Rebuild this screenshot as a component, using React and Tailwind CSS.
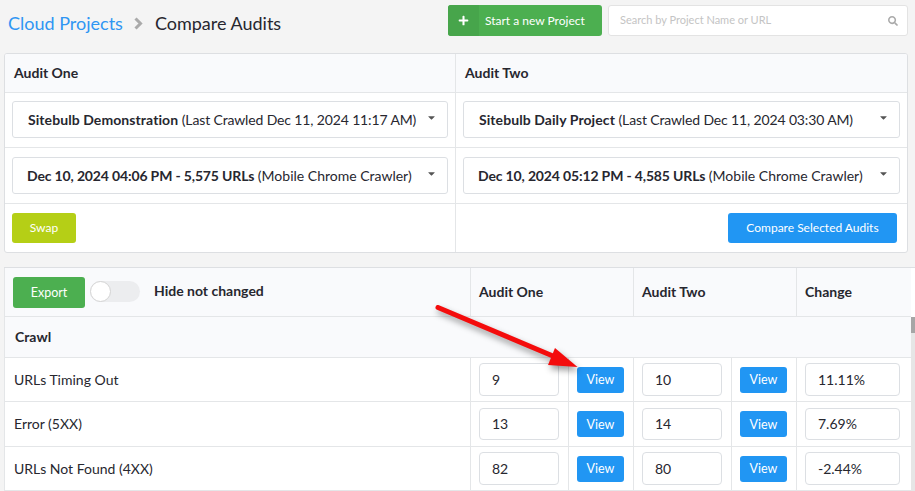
import React from 'react';
import { FaPlus, FaCaretDown, FaSearch } from 'react-icons/fa';

const rows = [
  { label: 'URLs Timing Out', one: '9', two: '10', change: '11.11%', h: 'h-[44px]', box: 'h-[33px]', nudge: '' },
  { label: 'Error (5XX)', one: '13', two: '14', change: '7.69%', h: 'h-[45px]', box: 'h-[32px]', nudge: 'pb-[2px]' },
  { label: 'URLs Not Found (4XX)', one: '82', two: '80', change: '-2.44%', h: 'h-[44px]', box: 'h-[33px]', nudge: '' },
];

const AuditSelect = ({ bold, rest, offset, boldTrack, restTrack }) => (
  <div className="relative h-[37px] flex items-center bg-white border border-[#dcdfe3] rounded-[3px] text-[14px] text-[#27272f]">
    <span className={`whitespace-nowrap ${offset}`}>
      <b className={`font-bold ${boldTrack}`}>{bold}</b> <span className={restTrack}>{rest}</span>
    </span>
    <FaCaretDown className="absolute right-[10px] top-[10px] w-[11px] h-[11px] text-[#555]" />
  </div>
);

const ValueBox = ({ value, box, className, nudge }) => (
  <div className={`${box} ${className} ${nudge} flex items-center bg-white border border-[#dcdfe3] rounded-[4px] pl-[12px] text-[14px] text-[#27272f]`}>
    {value}
  </div>
);

const ViewButton = () => (
  <button className="w-[47px] h-[26px] pt-[2px] bg-[#2196f3] rounded-[3px] text-white text-[12.5px]">View</button>
);

const Arrow = () => (
  <svg className="absolute left-[430px] top-[300px] w-[155px] h-[75px] drop-shadow-[2px_4px_3px_rgba(0,0,0,0.4)]" viewBox="0 0 155 75">
    <line x1="8" y1="7.5" x2="130" y2="59" stroke="#f40c0c" strokeWidth="5" strokeLinecap="round" />
    <polygon points="147.5,67 118,65 125,48" fill="#f40c0c" />
  </svg>
);

const App = () => {
  return (
    <div className="relative w-[915px] h-[491px] overflow-hidden bg-[#f4f4f4] font-['Lato',sans-serif] text-[#27272f]">
      {/* top bar */}
      <div className="flex items-start h-[53px] pt-[5px] pl-[8px] pr-[7px]">
        <a className="mt-[5px] text-[18px] text-[#2f96f3]">Cloud Projects</a>
        <svg className="mt-[12px] w-[9px] h-[13px] ml-[11px] mr-[12px] text-[#aaa]" viewBox="0 0 9 13">
          <polyline points="1.5,1.5 6.5,6.5 1.5,11.5" fill="none" stroke="currentColor" strokeWidth="3" />
        </svg>
        <span className="mt-[5px] text-[18px] text-[#27272f]">Compare Audits</span>
        <button className="ml-auto flex w-[154px] h-[31px] rounded-[3px] overflow-hidden bg-[#4caf50] text-white text-[12px]">
          <span className="w-[31px] h-full flex items-center justify-center bg-[#47a54b]">
            <FaPlus className="w-[11px] h-[11px]" />
          </span>
          <span className="pl-[6px] self-center">Start a new Project</span>
        </button>
        <div className="ml-[6px] w-[300px] h-[31px] flex items-center justify-between bg-white border border-[#e3e3e3] rounded-[3px] pl-[11px] pr-[9px] text-[11px] text-[#c4c4c4]">
          <span>Search by Project Name or URL</span>
          <FaSearch className="w-[10px] h-[10px] text-[#aaa]" />
        </div>
      </div>

      {/* audit pickers */}
      <div className="ml-[4px] w-[904px] h-[200px] bg-white border border-[#dddfe2] rounded-[3px] grid grid-cols-[451px_1fr] grid-rows-[39px_55px_56px_1fr] overflow-hidden">
        <div className="flex items-center pl-[9px] pb-[2px] bg-[#f9fafc] border-b border-r border-[#e4e6e8] text-[14px] font-bold">Audit One</div>
        <div className="flex items-center pl-[9px] pb-[2px] bg-[#f9fafc] border-b border-[#e4e6e8] text-[14px] font-bold">Audit Two</div>
        <div className="px-[7px] pt-[8px] border-b border-r border-[#e4e6e8]">
          <AuditSelect bold="Sitebulb Demonstration" rest="(Last Crawled Dec 11, 2024 11:17 AM)" offset="pl-[15px]" boldTrack="tracking-[0.08px]" restTrack="tracking-[-0.14px]" />
        </div>
        <div className="px-[7px] pt-[8px] border-b border-[#e4e6e8]">
          <AuditSelect bold="Sitebulb Daily Project" rest="(Last Crawled Dec 11, 2024 03:30 AM)" offset="pl-[15px]" boldTrack="tracking-[0.08px]" restTrack="tracking-[-0.14px]" />
        </div>
        <div className="px-[7px] pt-[9px] border-b border-r border-[#e4e6e8]">
          <AuditSelect bold="Dec 10, 2024 04:06 PM - 5,575 URLs" rest="(Mobile Chrome Crawler)" offset="pl-[14px]" boldTrack="tracking-[-0.15px]" restTrack="" />
        </div>
        <div className="px-[7px] pt-[9px] border-b border-[#e4e6e8]">
          <AuditSelect bold="Dec 10, 2024 05:12 PM - 4,585 URLs" rest="(Mobile Chrome Crawler)" offset="pl-[14px]" boldTrack="tracking-[-0.15px]" restTrack="" />
        </div>
        <div className="pl-[7px] pt-[9px] border-r border-[#e4e6e8]">
          <button className="w-[64px] h-[30px] bg-[#b5cf16] rounded-[3px] text-white text-[12px]">Swap</button>
        </div>
        <div className="flex justify-end pr-[10px] pt-[9px]">
          <button className="w-[169px] h-[30px] bg-[#2196f3] rounded-[3px] text-white text-[12px]">Compare Selected Audits</button>
        </div>
      </div>

      {/* comparison table */}
      <div className="mt-[14px] ml-[4px] border-t border-[#dddfe2] bg-white">
        <div className="flex w-[907px] h-[49px] bg-[#f9fafc] border-l border-b border-[#e4e6e8]">
          <div className="w-[466px] flex items-center pl-[8px] border-r border-[#e4e6e8]">
            <button className="w-[72px] h-[31px] pt-[2px] bg-[#4caf50] rounded-[3px] text-white text-[12.5px]">Export</button>
            <div className="relative ml-[5px] mb-[2px] w-[50px] h-[21px] bg-[#ecedef] rounded-full">
              <div className="absolute left-0 top-0 w-[21px] h-[21px] bg-white border border-[#d4d4d4] rounded-full"></div>
            </div>
            <span className="ml-[14px] mb-[3px] text-[14px] font-bold">Hide not changed</span>
          </div>
          <div className="w-[163px] flex items-center pl-[8px] pb-[2px] border-r border-[#e4e6e8] text-[14px] font-bold">Audit One</div>
          <div className="w-[163px] flex items-center pl-[8px] pb-[2px] border-r border-[#e4e6e8] text-[14px] font-bold">Audit Two</div>
          <div className="flex items-center pl-[8px] pb-[2px] text-[14px] font-bold">Change</div>
        </div>

        <div className="relative">
          <div className="w-[907px] border-l border-[#e4e6e8]">
            <div className="flex items-center h-[41px] pl-[10px] pb-[2px] bg-[#f9fafc] border-b border-[#e4e6e8] text-[14px] font-bold">Crawl</div>

            {rows.map((row) => (
              <div key={row.label} className={`flex ${row.h} border-b border-[#e4e6e8] text-[14px]`}>
                <div className={`w-[466px] flex items-center pl-[9px] ${row.nudge} border-r border-[#e4e6e8]`}>{row.label}</div>
                <div className="w-[98px] flex items-center pl-[8px] border-r border-[#e4e6e8]">
                  <ValueBox value={row.one} box={row.box} nudge={row.nudge} className="w-[80px]" />
                </div>
                <div className="w-[65px] flex items-center pl-[8px] border-r border-[#e4e6e8]"><ViewButton /></div>
                <div className="w-[98px] flex items-center pl-[8px] border-r border-[#e4e6e8]">
                  <ValueBox value={row.two} box={row.box} nudge={row.nudge} className="w-[80px]" />
                </div>
                <div className="w-[65px] flex items-center pl-[8px] border-r border-[#e4e6e8]"><ViewButton /></div>
                <div className="flex items-center pl-[8px]">
                  <ValueBox value={row.change} box={row.box} nudge={row.nudge} className="w-[95px]" />
                </div>
              </div>
            ))}
          </div>

          {/* scrollbar */}
          <div className="absolute right-0 top-0 bottom-0 w-[4px] bg-[#e6e6e6]">
            <div className="h-[16px] bg-[#a6a6a6]"></div>
          </div>
        </div>
      </div>

      <Arrow />
    </div>
  );
};

export default App;
